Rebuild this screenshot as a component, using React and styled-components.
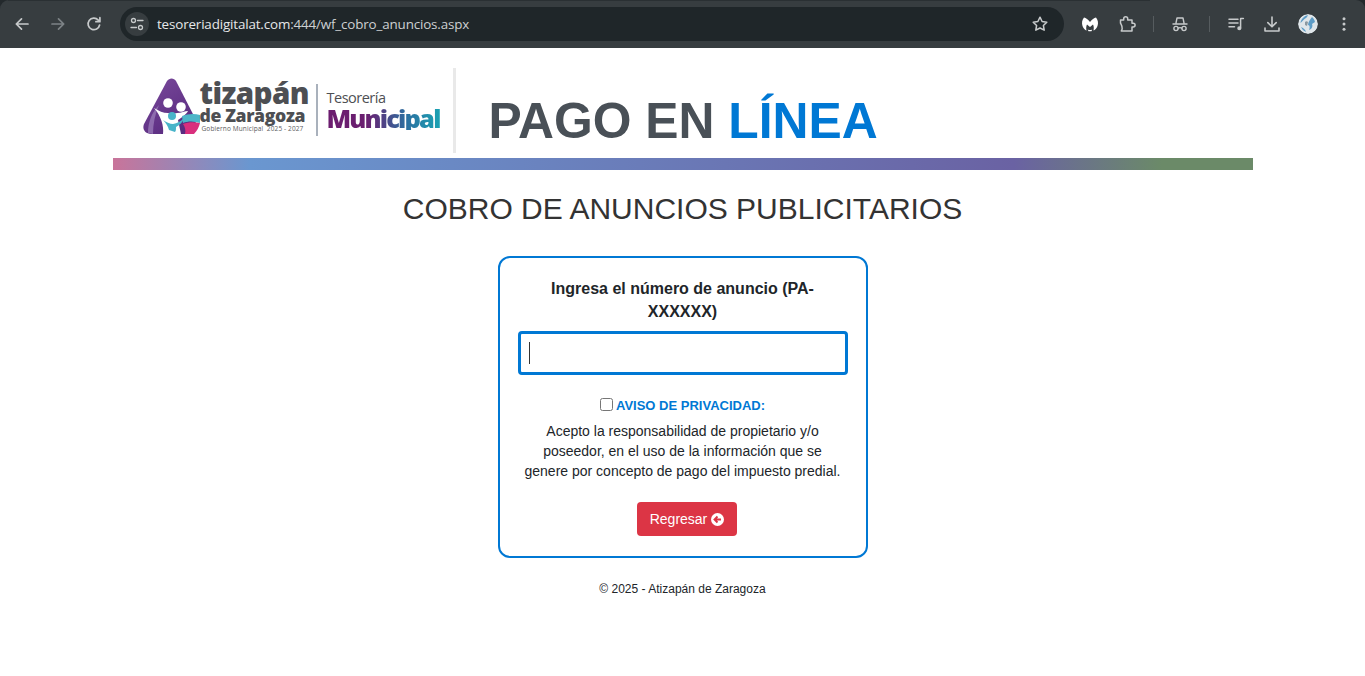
import React from "react";
import styled, { createGlobalStyle } from "styled-components";

const Global = createGlobalStyle`
  html, body { margin: 0; padding: 0; background: #fff; }
  body { font-family: "Liberation Sans", Arial, sans-serif; color: #212529; overflow: hidden; }
  * { box-sizing: border-box; }
`;
const Page = styled.div`height: 676px; display: flex; flex-direction: column;`;
const Frame = styled.div`background: #23292c; flex: none;`;
const Toolbar = styled.header`
  position: relative; height: 48px; background: #373d40; display: flex; align-items: center; padding: 0 12px 0 13px;
  border-radius: 9px 9px 0 0;
  &::before { content: ""; position: absolute; left: 8px; top: 0; width: 1142px; height: 1px; background: #2a3033; }
`;
const NavIcon = styled.svg`
  width: 18px; height: 18px; flex: none; fill: none; stroke: ${p => p.$dim ? "#7d8386" : "#c7cacb"};
  stroke-width: ${p => p.$sw || 1.7}; stroke-linecap: round; stroke-linejoin: round; margin-right: ${p => p.$mr || 0}px;
`;
const Omnibox = styled.div`
  width: 944px; height: 34px; margin-left: 17px; border-radius: 17px; background: #1f2629;
  display: flex; align-items: center; padding: 0 15px 0 5px; flex: none;
`;
const SiteChip = styled.div`
  width: 24px; height: 24px; border-radius: 50%; background: #373d40; display: flex; align-items: center; justify-content: center; flex: none;
`;
const Url = styled.div`
  margin-left: 8px; flex: 1; font: 13.4px "Open Sans", "Noto Sans", sans-serif; letter-spacing: -0.15px; color: #e6e8e9; white-space: nowrap;
  span { color: #cdd0d2; }
`;
const Actions = styled.div`display: flex; align-items: center; margin-left: 17px; gap: 17px;`;
const Shield = styled.svg`width: 18px; height: 18px; flex: none; margin-right: 2px;`;
const Sep = styled.div`width: 1px; height: 16px; background: #565c5f; flex: none;`;
const Avatar = styled.svg`width: 20px; height: 20px; border-radius: 50%; flex: none; margin-right: 1px;`;
const Kebab = styled.svg`width: 16px; height: 18px; flex: none; fill: #c7cacb;`;

const Main = styled.main`width: 1140px; margin: 0 auto; flex: 1; display: flex; flex-direction: column; align-items: center;`;
const Banner = styled.div`
  width: 100%; height: 110px; padding: 20px 0 5px 30px; display: flex; align-items: stretch; flex: none;
`;
const LogoBox = styled.div`width: 313px; border-right: 3px solid #e9e9e9; display: flex; align-items: center; padding-bottom: 7px; flex: none;`;
const LogoMark = styled.svg`width: 57px; height: 59px; flex: none;`;
const LogoNames = styled.div`width: 110px; display: flex; flex-direction: column; flex: none;`;
const Tizapan = styled.div`font: 800 29.5px/25px "Open Sans", sans-serif; color: #4d4f53; letter-spacing: -0.6px; transform: translateY(-1px);`;
const Zaragoza = styled.div`font: 800 17.6px/18px "Open Sans", sans-serif; color: #4d4f53; letter-spacing: -0.35px; white-space: nowrap;`;
const Gov = styled.div`font: 6.5px/9px "Open Sans", sans-serif; color: #5a5c60; white-space: nowrap; letter-spacing: 0.12px; margin-left: 2px;`;
const LogoRule = styled.div`width: 2px; height: 52px; background: #a9b1bc; margin: 6px 9px 0 6px; flex: none;`;
const LogoDept = styled.div`display: flex; flex-direction: column; flex: none; margin-top: 5px;`;
const Tesoreria = styled.div`font: 14.5px/16px "Open Sans", sans-serif; letter-spacing: -0.5px; color: #4d4f53;`;
const Municipal = styled.div`
  font: 800 25.5px/24px "Open Sans", sans-serif; letter-spacing: -1.85px;
  background: linear-gradient(90deg, #6c1d6f 0%, #6a1f70 35%, #2c6fa0 70%, #1aa2b3 100%);
  -webkit-background-clip: text; background-clip: text; color: transparent;
`;
const Title = styled.h1`
  margin: 29px 0 0 33px; font: 700 49.8px/1 "Liberation Sans", sans-serif; color: #495057; white-space: nowrap;
  span { color: #0078d4; }
`;
const Stripe = styled.div`
  width: 100%; height: 12px; flex: none;
  background: linear-gradient(90deg, #c9749a 0%, #6a97d0 12%, #6a62a3 79%, #6b8a68 92%, #6b8a68 100%);
`;
const Heading = styled.h2`margin: 21px 0 0; font: 400 30px/36px "Liberation Sans", sans-serif; color: #333;`;
const Card = styled.section`
  width: 370px; height: 302px; margin-top: 29px; border: 2px solid #0078d4; border-radius: 12px;
  padding: 19px 18px 0; display: flex; flex-direction: column; align-items: center; text-align: center; flex: none;
`;
const Label = styled.label`font: 700 16px/23px "Liberation Sans", sans-serif; color: #212529; width: 290px;`;
const FieldWrap = styled.div`position: relative; width: 330px; padding-top: 8px; flex: none;`;
const Field = styled.input`
  display: block; width: 330px; height: 44px; border: 3px solid #0078d4; border-radius: 4px; outline: none; background: #fff; padding: 0 8px;
`;
const Caret = styled.div`position: absolute; left: 11px; top: 19px; width: 1px; height: 22px; background: #333;`;
const Notice = styled.div`display: flex; align-items: center; margin-top: 22px; height: 18px;`;
const Check = styled.span`
  width: 13px; height: 13px; border: 1px solid #767676; border-radius: 2.5px; background: #fff; margin: -3px 3px 0 0; flex: none;
`;
const NoticeText = styled.span`font: 700 13px/18px "Liberation Sans", sans-serif; color: #0078d4;`;
const Terms = styled.p`margin: 6px 0 0; font: 14px/20px "Liberation Sans", sans-serif; color: #212529; width: 320px;`;
const Back = styled.button`
  margin: 21px 0 0 8px; width: 100px; height: 34px; border: none; border-radius: 4px; background: #dc3545; color: #fff;
  font: 14px "Liberation Sans", sans-serif; display: flex; align-items: center; justify-content: center; gap: 4px; padding: 0 0 0 1px; flex: none;
`;
const Footer = styled.footer`margin-top: 22px; font: 12px/18px "Liberation Sans", sans-serif; color: #212529;`;

export default function App() {
  return (
    <Page>
      <Global />
      <Frame>
        <Toolbar>
          <NavIcon viewBox="0 0 18 18" $mr={18}><path d="M15 9H3.5M8.5 3.8 3.3 9l5.2 5.2" /></NavIcon>
          <NavIcon viewBox="0 0 18 18" $dim $mr={18}><path d="M3 9h11.5M9.5 3.8 14.7 9l-5.2 5.2" /></NavIcon>
          <NavIcon viewBox="0 0 18 18"><path d="M14.6 10a5.8 5.8 0 1 1-1.4-5l1.6 1.7M14.9 2.7v4h-4" /></NavIcon>
          <Omnibox>
            <SiteChip>
              <NavIcon viewBox="0 0 18 18" $sw={1.3}>
                <circle cx="5.5" cy="5.5" r="2" /><path d="M9.5 5.5h5.5M3 12.5h5.5" /><circle cx="12.5" cy="12.5" r="2" />
              </NavIcon>
            </SiteChip>
            <Url>tesoreriadigitalat.com<span>:444/wf_cobro_anuncios.aspx</span></Url>
            <NavIcon viewBox="0 0 18 18" $sw={1.5}>
              <path d="m9 2.2 2.1 4.3 4.7.7-3.4 3.3.8 4.7L9 13l-4.2 2.2.8-4.700-3.400-3.300 4.700-.7z" />
            </NavIcon>
          </Omnibox>
          <Actions>
            <Shield viewBox="0 0 18 18">
              <path fill="#fff" d="M3 2.500C5 3 7 4.500 9 7c2-2.500 4-4 6-4.500 2 2.500 2.500 5.500 1.500 8.500-1 2.500-2.500 4-4 4.500.5-2.500.3-4.500-.5-6L9 12 6 9.500c-.8 1.500-1 3.500-.5 6-1.500-.5-3-2-4-4.500C.5 8 1 5 3 2.500z" />
              <path fill="#fff" d="M6.800 14.500c1.400.7 3 .7 4.400 0l-.7 1.800h-3z" />
            </Shield>
            <NavIcon viewBox="0 0 18 18" $sw={1.5}>
              <path d="M2.500 5h3.200V3.800a2 2 0 0 1 4 0V5h4.300v3.200h1.200a1.900 1.900 0 0 1 0 3.800H14v4H3.300c.9-1.300 1.100-3.200.6-4.800-.3-1-.9-2-1.400-3z" />
            </NavIcon>
            <Sep />
            <NavIcon viewBox="0 0 18 18" $sw={1.4} $mr={3}>
              <path d="M2 9h14M5 8l1-5h6l1 5" /><circle cx="5" cy="13.500" r="2.100" /><circle cx="13" cy="13.500" r="2.100" /><path d="M7.200 13.200c1-.6 2.600-.6 3.600 0" />
            </NavIcon>
            <Sep />
            <NavIcon viewBox="0 0 18 18" $sw={1.5} $mr={1}>
              <path d="M2 4.300h9M2 8h9M2 11.700h5.500" /><path d="M13.600 13V3.600h2.800" /><circle cx="12.300" cy="13.200" r="1.300" fill="#c7cacb" />
            </NavIcon>
            <NavIcon viewBox="0 0 18 18" $sw={1.6}>
              <path d="M9 2v9.500M4.800 7.600 9 11.800l4.200-4.200M2 13v3h14v-3" />
            </NavIcon>
            <Avatar viewBox="0 0 20 20">
              <circle cx="10" cy="10" r="10" fill="#dfe6ea" />
              <path fill="#5d9cc6" d="M10 1c-4 1-7 4-7.500 8 1.500-1 2.500-3 4-4 1.500-1 3-2 3.500-4zM14 3c-2 3-4 5-4 8 2 0 2 3 1 5 3-1 4-4 3-6l3-2c-.5-2-1.500-4-3-5zM3 13c1 2 2.500 4 5 5-.5-2-2-4-5-5z" />
              <path fill="#8b98a0" d="M7 8c1-1 2-1 3 0l-1 4-2-1z" />
            </Avatar>
            <Kebab viewBox="0 0 16 18"><circle cx="8" cy="3.700" r="1.500" /><circle cx="8" cy="9" r="1.500" /><circle cx="8" cy="14.300" r="1.500" /></Kebab>
          </Actions>
        </Toolbar>
      </Frame>
      <Main>
        <Banner>
          <LogoBox>
            <LogoMark viewBox="0 0 57 59">
              <defs>
                <linearGradient id="tri" x1="0" y1="0" x2="0.6" y2="1">
                  <stop offset="0" stopColor="#7a4a9c" /><stop offset="1" stopColor="#5a2c80" />
                </linearGradient>
              </defs>
              <path fill="url(#tri)" d="M24 3c2.200-3.500 7-3.500 9 0L52 40c2 6 0 13-4 16H8C2 56-1 51 1 46z" />
              <path fill="#9b7dba" d="M5 55C5 44 9 34 16 27c-4 9-6 19-6 29z" opacity=".75" />
              <path fill="#fff" d="M11 30c5 3 9 5 14 5 3 1 6 1 9 0 4 0 8-2 11-2-2 4-7 7-10 9l3 14H20c1-8-2-18-9-26z" />
              <circle cx="25" cy="25" r="4.800" fill="#fff" />
              <circle cx="38" cy="29" r="4.800" fill="#fff" />
              <path fill="#4db5c8" d="M39 38c5-2 12-3 18-1v8c-6-2-12-2-17 0z" />
              <path fill="#d92f7d" d="M40 46c5-2 11-2 17-1-1 4-3 8-6 11H42c1-4 0-7-2-10z" />
              <circle cx="29" cy="38" r="4" fill="#48b4c9" />
              <path fill="#48b4c9" d="M20 42c3 2 7 4 10 4 4-.5 8-3 11-6-1 4-4 7-8 9 0 2 0 4-1 5l-6-2c-1-4-3-7-6-10z" />
            </LogoMark>
            <LogoNames>
              <Tizapan>tizapán</Tizapan>
              <Zaragoza>de Zaragoza</Zaragoza>
              <Gov>Gobierno Municipal&nbsp; 2025 - 2027</Gov>
            </LogoNames>
            <LogoRule />
            <LogoDept>
              <Tesoreria>Tesorería</Tesoreria>
              <Municipal>Municipal</Municipal>
            </LogoDept>
          </LogoBox>
          <Title>PAGO EN <span>LÍNEA</span></Title>
        </Banner>
        <Stripe />
        <Heading>COBRO DE ANUNCIOS PUBLICITARIOS</Heading>
        <Card>
          <Label>Ingresa el número de anuncio (PA-XXXXXX)</Label>
          <FieldWrap>
            <Field />
            <Caret />
          </FieldWrap>
          <Notice>
            <Check />
            <NoticeText>AVISO DE PRIVACIDAD:</NoticeText>
          </Notice>
          <Terms>Acepto la responsabilidad de propietario y/o poseedor, en el uso de la información que se genere por concepto de pago del impuesto predial.</Terms>
          <Back>
            Regresar
            <svg width="13" height="13" viewBox="0 0 13 13">
              <circle cx="6.500" cy="6.500" r="6.500" fill="#fff" />
              <path d="M10 6.500H4M6.500 3.500l-3 3 3 3" fill="none" stroke="#dc3545" strokeWidth="1.900" />
            </svg>
          </Back>
        </Card>
        <Footer>© 2025 - Atizapán de Zaragoza</Footer>
      </Main>
    </Page>
  );
}
